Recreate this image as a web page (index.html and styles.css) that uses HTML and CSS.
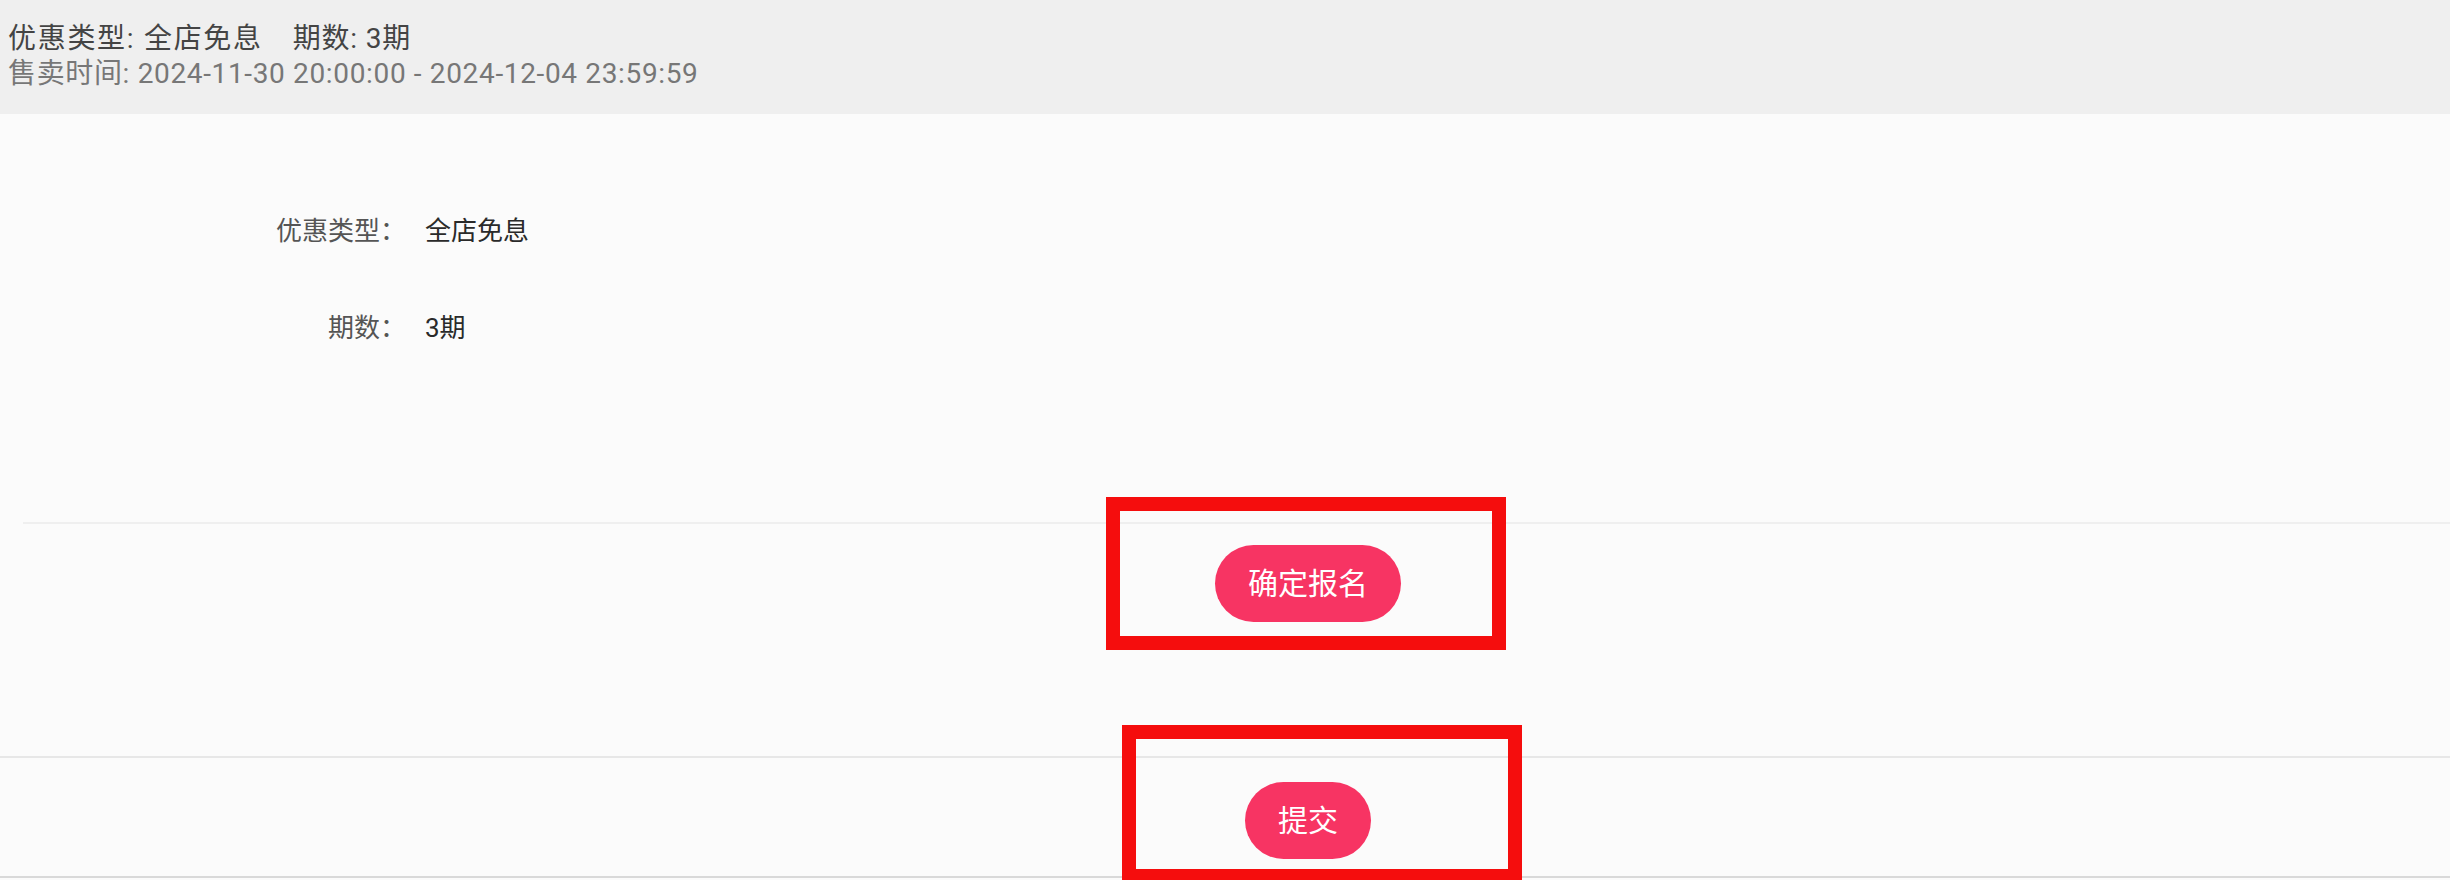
FILE: index.html
```html
<!DOCTYPE html>
<html lang="zh-CN">
<head>
<meta charset="utf-8">
<title>活动报名</title>
<link rel="stylesheet" href="styles.css">
</head>
<body>
  <header class="summary">
    <div class="summary-main">优惠类型: 全店免息<span class="summary-gap">期数: 3期</span></div>
    <div class="summary-time">售卖时间: 2024-11-30 20:00:00 - 2024-12-04 23:59:59</div>
  </header>

  <section class="detail-form">
    <div class="form-row">
      <span class="form-label">优惠类型：</span>
      <span class="form-value">全店免息</span>
    </div>
    <div class="form-row">
      <span class="form-label">期数：</span>
      <span class="form-value">3期</span>
    </div>
  </section>

  <section class="action-bar action-bar--confirm">
    <span class="action-wrap">
      <button class="pill-btn" type="button">确定报名</button>
      <span class="mark-frame mark-frame--confirm"></span>
    </span>
  </section>

  <footer class="action-bar action-bar--submit">
    <span class="action-wrap">
      <button class="pill-btn" type="button">提交</button>
      <span class="mark-frame mark-frame--submit"></span>
    </span>
  </footer>
</body>
</html>
```

FILE: styles.css
```css
html, body {
  margin: 0;
  padding: 0;
}

body {
  width: 2450px;
  height: 880px;
  overflow: hidden;
  background: #fbfbfb;
  font-family: Roboto, "Noto Sans CJK SC", sans-serif;
}

/* top summary band */
.summary {
  height: 114px;
  box-sizing: border-box;
  padding: 21px 0 0 8px;
  background: #efefef;
  font-size: 28px;
  line-height: 35px;
  letter-spacing: 0.65px;
  white-space: nowrap;
}

.summary-main {
  color: #444;
  letter-spacing: 1.7px;
}

.summary-gap {
  margin-left: 30px;
  letter-spacing: 0.8px;
}

.summary-time {
  color: #777;
}

/* label / value rows */
.detail-form {
  display: grid;
  grid-template-columns: 406px max-content;
  column-gap: 19px;
  row-gap: 61px;
  padding: 99px 0 176px;
  font-size: 26px;
  line-height: 36px;
}

.form-row {
  display: contents;
}

.form-label {
  text-align: right;
  color: #555;
}

.form-value {
  color: #2a2a2a;
}

/* button rows */
.action-bar {
  display: flex;
  justify-content: center;
  padding-left: 166px;
}

.action-bar--confirm {
  margin-left: 23px;
  padding-left: 143px;
  border-top: 2px solid #efefef;
  padding-top: 21px;
  height: 234px;
  box-sizing: border-box;
}

.action-bar--submit {
  border-top: 2px solid #e7e7e7;
  border-bottom: 2px solid #d9d9d9;
  padding-top: 24px;
  height: 122px;
  box-sizing: border-box;
}

.action-wrap {
  position: relative;
  display: inline-block;
  height: 77px;
}

.pill-btn {
  display: block;
  height: 77px;
  padding: 0 33px;
  border: 0;
  border-radius: 39px;
  background: #f73463;
  color: #fff;
  font-family: Roboto, "Noto Sans CJK SC", sans-serif;
  font-size: 30px;
  line-height: 77px;
  cursor: pointer;
}

/* red highlight boxes drawn over the buttons */
.mark-frame {
  position: absolute;
  border: 14px solid #f50d0d;
  pointer-events: none;
}

.mark-frame--confirm {
  top: -48px;
  left: -109px;
  right: -105px;
  bottom: -28px;
}

.mark-frame--submit {
  top: -57px;
  left: -123px;
  right: -151px;
  bottom: -24px;
}
```
